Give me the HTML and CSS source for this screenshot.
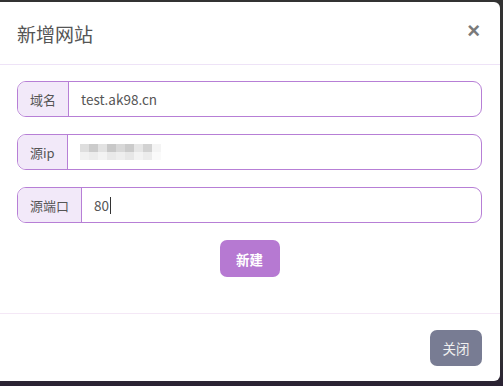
FILE: index.html
```html
<!DOCTYPE html>
<html>
<head>
    <meta charset="utf-8">
    <title>新增网站</title>
    <link rel="stylesheet" href="styles.css">
</head>
<body>
    <div class="modal">
        <div class="modal-header">
            <h4>新增网站</h4>
            <span class="close">&times;</span>
        </div>

        <div class="modal-body">
            <div class="input-group">
                <span class="addon">域名</span>
                <div class="field">test.ak98.cn</div>
            </div>

            <div class="input-group">
                <span class="addon">源ip</span>
                <div class="field">
                    <div class="mosaic">
                        <i class="m1"></i><i class="m2"></i><i class="m3"></i><i class="m4"></i><i class="m5"></i><i class="m6"></i><i class="m7"></i><i class="m8"></i><i class="m9"></i>
                        <i class="n1"></i><i class="n2"></i><i class="n3"></i><i class="n4"></i><i class="n5"></i><i class="n6"></i><i class="n7"></i><i class="n8"></i><i class="n9"></i>
                    </div>
                </div>
            </div>

            <div class="input-group">
                <span class="addon">源端口</span>
                <div class="field">80<span class="caret"></span></div>
            </div>

            <div class="actions">
                <button class="btn-create">新建</button>
            </div>
        </div>

        <div class="modal-footer">
            <button class="btn-close">关闭</button>
        </div>
    </div>
</body>
</html>
```

FILE: styles.css
```css
* {
    margin: 0;
    padding: 0;
    box-sizing: border-box;
    font-family: "Noto Sans CJK SC", "Liberation Sans", sans-serif;
}

body {
    background: linear-gradient(to bottom, #333 0%, #333 90%, #2a2233 100%);
    height: 386px;
    overflow: hidden;
    padding-top: 2px;
}

.modal {
    width: 506px;
    height: 379px;
    margin-left: -6px;
    background: white;
    border-radius: 6px;
    display: flex;
    flex-direction: column;
}

.modal-header {
    height: 63px;
    padding: 0 17px 0 23px;
    border-bottom: 1px solid #eee3f7;
    display: flex;
    justify-content: space-between;
    align-items: center;
}

.modal-header h4 {
    font-size: 19px;
    font-weight: 400;
    color: #555;
    margin-top: 0;
}

.close {
    font-family: "Liberation Sans", sans-serif;
    font-size: 22px;
    font-weight: bold;
    color: #7a7a7a;
    line-height: 1;
    margin-top: -5px;
    margin-right: 3px;
}

.modal-body {
    padding: 16px 18px 36px 23px;
    border-bottom: 1px solid #f4e8f6;
}

.input-group {
    display: flex;
    height: 36px;
    margin-bottom: 17px;
    border: 1px solid #b77fd6;
    border-radius: 9px;
    overflow: hidden;
    font-size: 13px;
    color: #555;
}

.addon {
    display: flex;
    align-items: center;
    padding: 0 12px;
    background: #f2e9f9;
    border-right: 1px solid #b77fd6;
}

.field {
    flex: 1;
    display: flex;
    align-items: center;
    padding: 0 12px;
    font-size: 13.5px;
}

.caret {
    display: inline-block;
    width: 1px;
    height: 17px;
    background: #333;
    margin-left: 1px;
}

.mosaic {
    display: grid;
    grid-template-columns: repeat(9, 9px);
    grid-template-rows: 8px 8px;
    margin-left: 0;
}

.mosaic i { display: block; }
.m1 { background: #dedede; }
.m2 { background: #cbcbcb; }
.m3 { background: #e2e2e2; }
.m4 { background: #c8c8c8; }
.m5 { background: #d8d8d8; }
.m6 { background: #cbcbcb; }
.m7 { background: #e6e6e6; }
.m8 { background: #d2d2d2; }
.m9 { background: #f4f4f4; }
.n1 { background: #f1f1f1; }
.n2 { background: #ececec; }
.n3 { background: #f3f3f3; }
.n4 { background: #e9e9e9; }
.n5 { background: #eeeeee; }
.n6 { background: #e7e7e7; }
.n7 { background: #f3f3f3; }
.n8 { background: #ececec; }
.n9 { background: #fafafa; }

.actions {
    display: flex;
    justify-content: center;
    margin-top: 0;
    padding-left: 0;
}

.btn-create {
    width: 60px;
    height: 37px;
    background: #b679d2;
    color: white;
    border: none;
    border-radius: 7px;
    font-size: 13.5px;
    font-weight: 700;
}

.modal-footer {
    flex: 1;
    display: flex;
    justify-content: flex-end;
    align-items: flex-start;
    padding: 16px 18px 0 0;
}

.btn-close {
    width: 52px;
    height: 36px;
    background: #787c93;
    color: #f0f0f0;
    border: none;
    border-radius: 7px;
    font-size: 13.5px;
}
```
